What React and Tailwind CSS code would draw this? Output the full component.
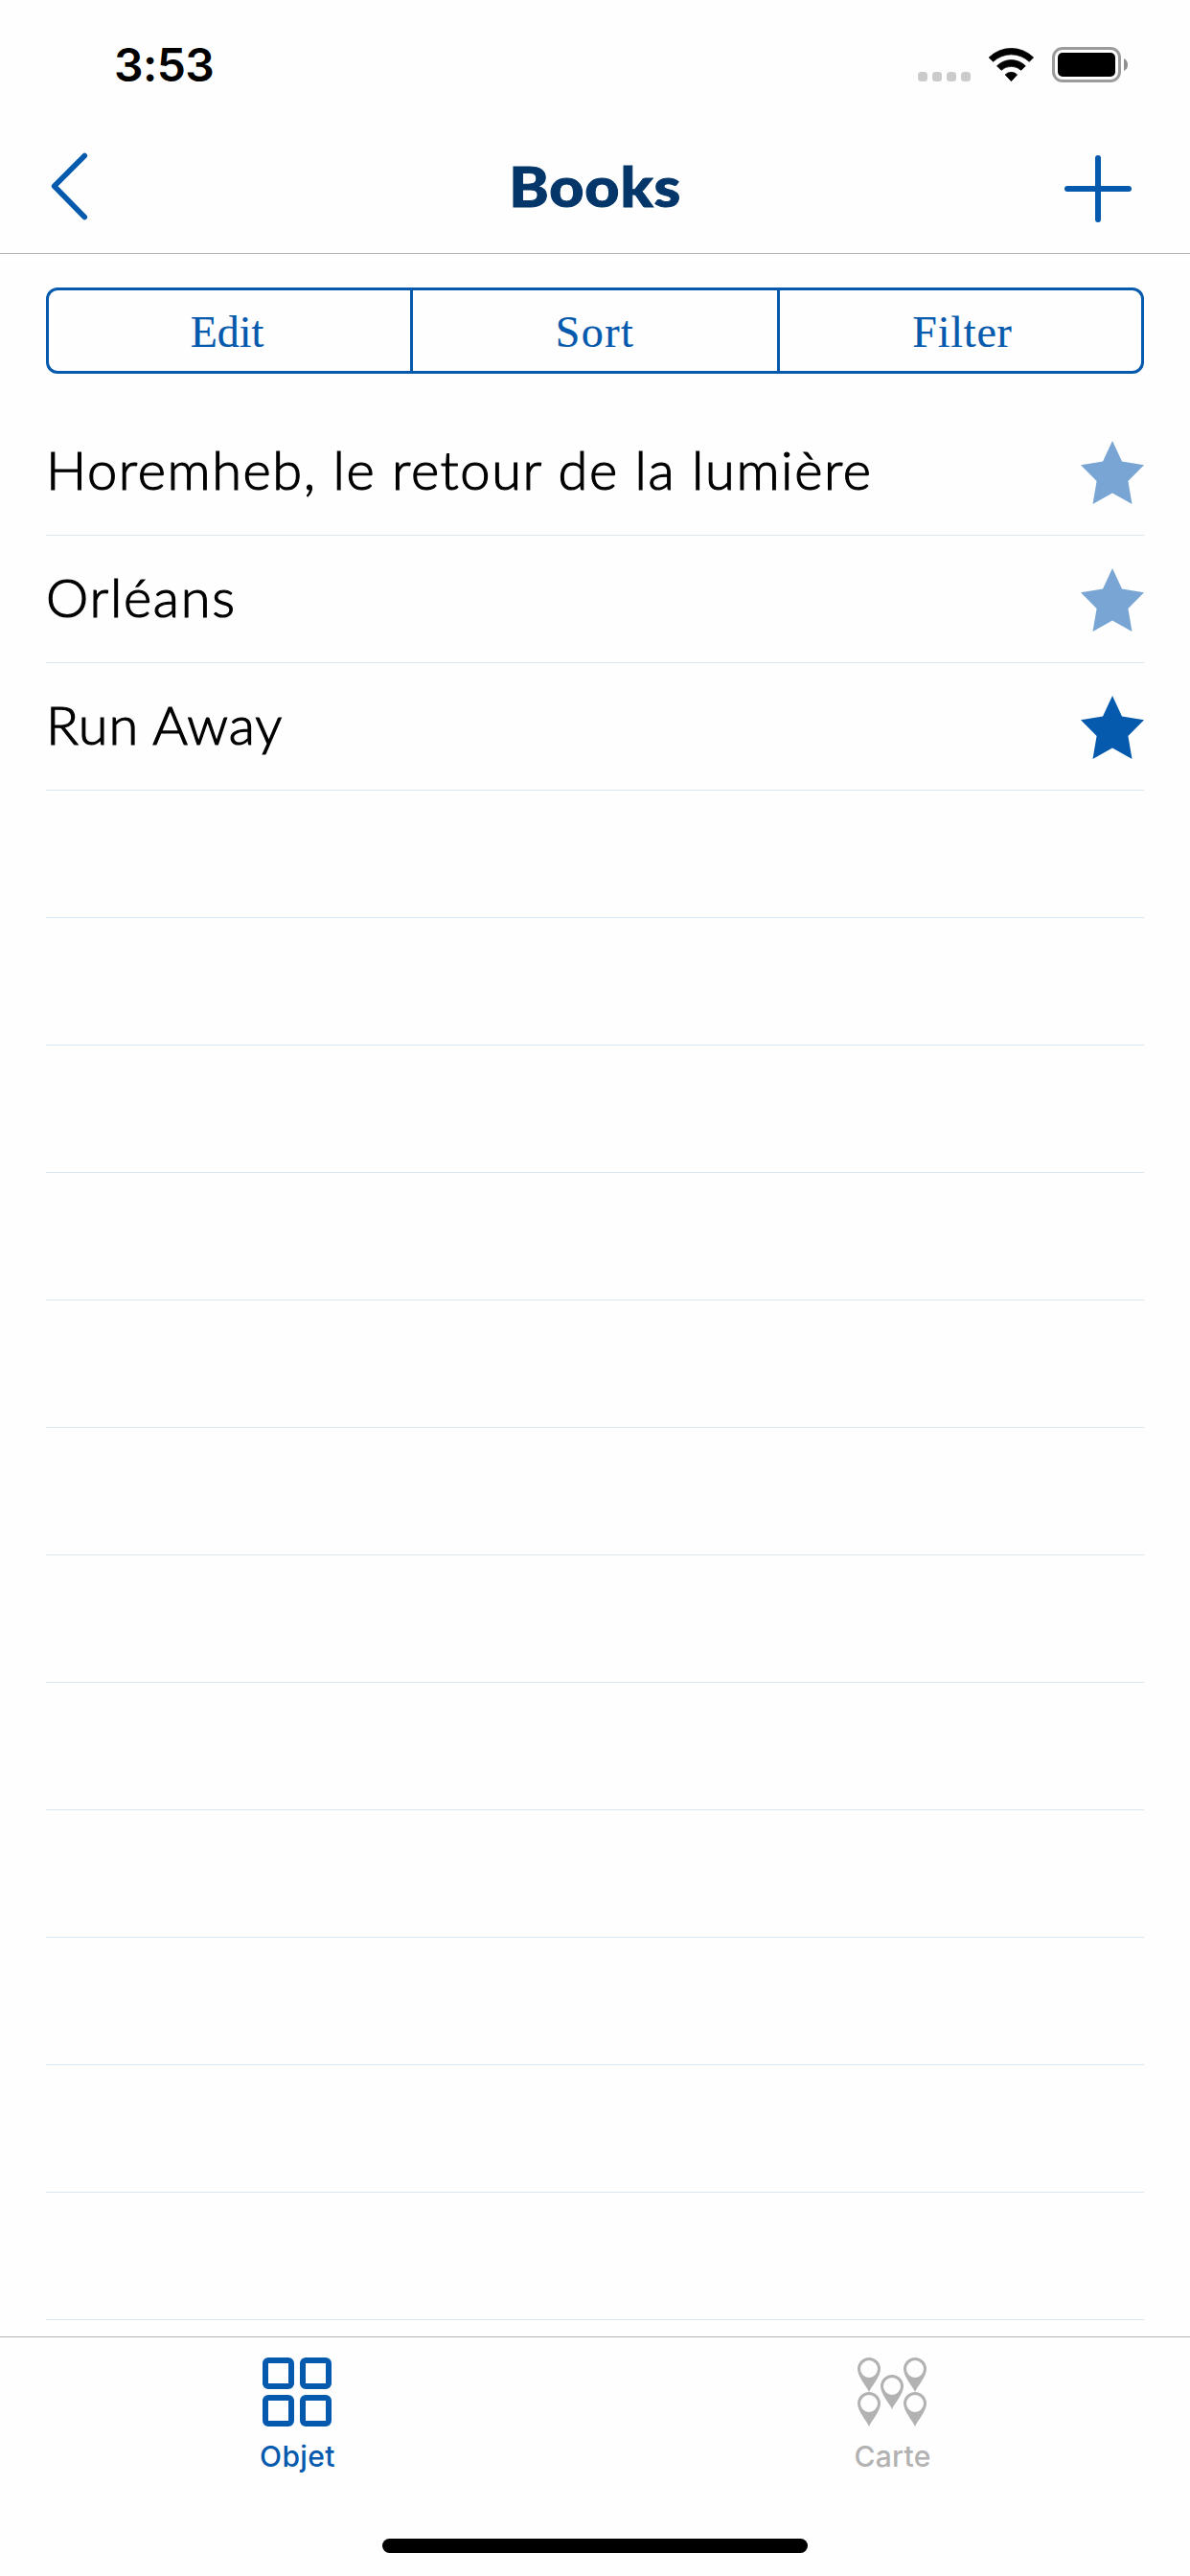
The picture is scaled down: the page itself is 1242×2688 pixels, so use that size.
const books = [
  { title: "Horemheb, le retour de la lumière", star: "text-[#78a5d3]", spacing: "tracking-[1.6px]" },
  { title: "Orléans", star: "text-[#78a5d3]", spacing: "tracking-[1.7px]" },
  { title: "Run Away", star: "text-[#055aad]", spacing: "tracking-[0.9px]" },
];

const emptyRows = Array.from({ length: 12 }, (_, i) => i);

function StatusBar() {
  return (
    <div className="flex h-[132px] justify-between pr-[65px] pl-[119px]">
      <span className="mt-[38px] h-[60px] font-['Inter',sans-serif] text-[48px] leading-[60px] font-semibold tracking-[-0.6px] text-black">
        3:53
      </span>
      <div className="mt-[49px] flex h-[37px]">
        <div className="mt-[26px] flex gap-[5px]">
          <span className="size-[10px] rounded-[3.5px] bg-[#cbcbcb]" />
          <span className="size-[10px] rounded-[3.5px] bg-[#cbcbcb]" />
          <span className="size-[10px] rounded-[3.5px] bg-[#cbcbcb]" />
          <span className="size-[10px] rounded-[3.5px] bg-[#cbcbcb]" />
        </div>
        <svg className="ml-[18px] h-[37px] w-[49px]" viewBox="0 0 49 37" stroke="#000" strokeWidth="0.8" strokeLinejoin="round">
          <path d="M1.2 11A33 33 0 0 1 47.6 11L43.2 15.3A27.5 27.5 0 0 0 5.6 15.3Z" />
          <path d="M9.5 19.8A21 21 0 0 1 39.3 19.8L34.8 24.3A15.5 15.5 0 0 0 14 24.3Z" />
          <path d="M18.2 28.9A8.8 8.8 0 0 1 30.6 28.9L24.4 35.7Z" />
        </svg>
        <div className="ml-[18px] h-[37px] w-[72px] rounded-[11px] border-3 border-[#9b9b9b] p-[3px]">
          <div className="h-full rounded-[5px] bg-black" />
        </div>
        <svg className="mt-[12px] ml-[3px] h-[13px] w-[4px]" viewBox="0 0 4 13">
          <path d="M0 0Q4 2 4 6.500T0 13Z" fill="#8f8f8f" />
        </svg>
      </div>
    </div>
  );
}

function NavBar() {
  return (
    <div className="flex h-[133px] items-center justify-between border-b border-[#b2b2b2] pr-[61px] pl-[53px]">
      <svg className="mb-[8px] h-[71px] w-[70px]" viewBox="0 0 70 71" fill="none" stroke="#055aad" strokeWidth="5.6" strokeLinecap="round" strokeLinejoin="round">
        <path d="M35.3 3.5L3.600 35.3L35.3 67.5" />
      </svg>
      <h1 className="scale-x-110 pb-[8px] pl-[8px] font-['Lato',sans-serif] text-[57px] leading-[70px] font-black tracking-[0.8px] text-[#04366a] [-webkit-text-stroke:1px_#04366a]">
        Books
      </h1>
      <svg className="mb-[2px] size-[70px]" viewBox="0 0 70 70" stroke="#055aad" strokeWidth="6" strokeLinecap="round">
        <path d="M3 35H67M35 3V67" />
      </svg>
    </div>
  );
}

function Segments() {
  return (
    <div className="mx-[48px] mt-[35px] flex h-[90px] rounded-[12px] border-3 border-[#055aad] font-['Liberation_Serif',serif] text-[46px] leading-[60px] text-[#055aad] [-webkit-text-stroke:0.2px_#055aad]">
      <button className="w-[380px] border-r-3 border-[#055aad] pt-[4px] pr-[5px]">Edit</button>
      <button className="w-[383px] border-r-3 border-[#055aad] pt-[4px] tracking-[1.5px]">Sort</button>
      <button className="w-[377px] pt-[4px] pl-[4px] tracking-[0.8px]">Filter</button>
    </div>
  );
}

function Star({ className }) {
  return (
    <svg className={className} viewBox="0 0 66 66" fill="currentColor">
      <path d="M33 0L43 21.5L66 25.2L49.4 42L53.5 66L33 54.5L12.5 66L16.6 42L0 25.2L23 21.5Z" />
    </svg>
  );
}

function BookList() {
  return (
    <ul className="mx-[48px] mt-[36px]">
      {books.map((book) => (
        <li key={book.title} className="flex h-[133px] items-center justify-between border-b border-[#d6e6f2]">
          <span className={"pb-[4px] font-['Lato',sans-serif] text-[56px] leading-[70px] font-light text-black [-webkit-text-stroke:1.2px_#000] " + book.spacing}>
            {book.title}
          </span>
          <Star className={"mt-[2px] size-[66px] " + book.star} />
        </li>
      ))}
      {emptyRows.map((row) => (
        <li key={row} className="h-[133px] border-b border-[#d6e6f2]" />
      ))}
    </ul>
  );
}

const pins = [[0, 0], [48, 0], [24, 18], [0, 36], [48, 36]];

function TabBar() {
  return (
    <div className="mt-[17px] flex h-[211px] border-t border-[#b2b2b2] font-['Inter',sans-serif] text-[30px] leading-[36px] font-medium">
      <div className="flex w-1/2 flex-col items-center pt-[21px] text-[#055aad]">
        <div className="mr-px grid grid-cols-2 gap-[6px]">
          <span className="size-[33px] rounded-[6px] border-6 border-[#055aad]" />
          <span className="size-[33px] rounded-[6px] border-6 border-[#055aad]" />
          <span className="size-[33px] rounded-[6px] border-6 border-[#055aad]" />
          <span className="size-[33px] rounded-[6px] border-6 border-[#055aad]" />
        </div>
        <span className="mt-[13px] tracking-[0.4px]">Objet</span>
      </div>
      <div className="flex w-1/2 flex-col items-center pt-[21px] text-[#b2b2b2]">
        <svg className="mr-px size-[72px]" viewBox="0 0 72 72" fill="currentColor">
          {pins.map(([x, y]) => (
            <path
              key={x + "-" + y}
              transform={`translate(${x} ${y})`}
              fillRule="evenodd"
              d="M12 36C9.500 30 0 20 0 12A12 12 0 0 1 24 12C24 20 14.500 30 12 36ZM12 3A9 9 0 0 0 12 21A9 9 0 0 0 12 3Z"
            />
          ))}
        </svg>
        <span className="mt-[13px] tracking-[0.3px]">Carte</span>
      </div>
    </div>
  );
}

export default function App() {
  return (
    <div className="flex h-[2688px] w-[1242px] flex-col overflow-hidden bg-[#fefefe]">
      <StatusBar />
      <NavBar />
      <Segments />
      <BookList />
      <TabBar />
      <div className="mx-auto h-[15px] w-[444px] rounded-full bg-black" />
    </div>
  );
}
